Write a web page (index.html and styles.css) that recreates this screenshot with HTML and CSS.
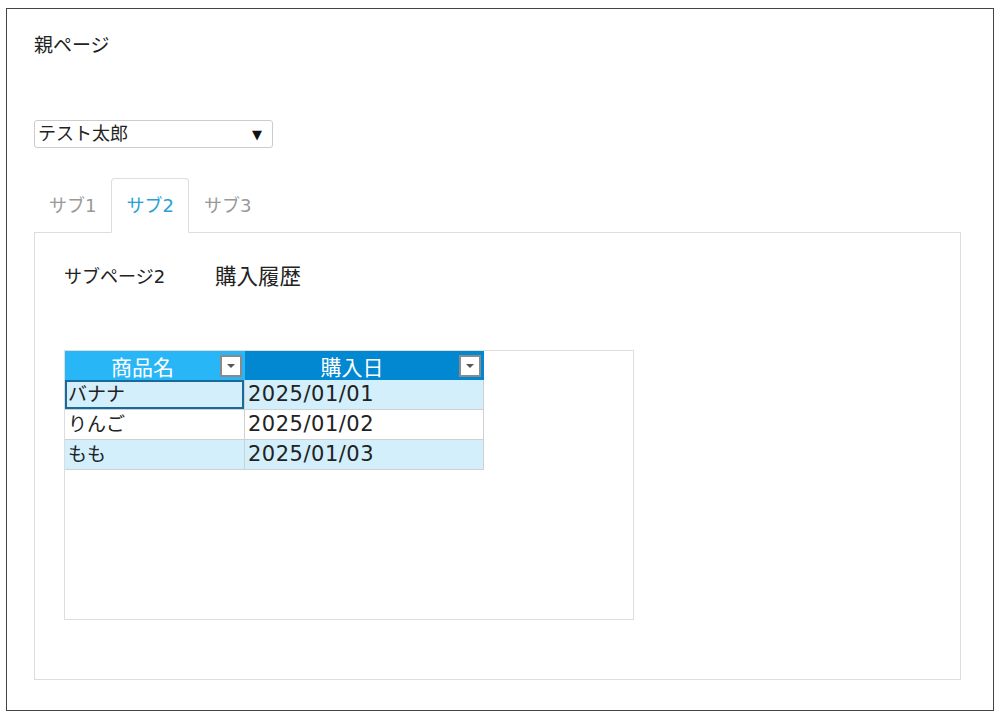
FILE: index.html
```html
<!DOCTYPE html>
<html lang="ja">
<head>
    <meta charset="UTF-8">
    <meta name="viewport" content="width=device-width, initial-scale=1.0">
    <title>親ページ</title>
    <link rel="stylesheet" href="styles.css">
</head>

<body>
    <div class="page">
        <h1 class="title">親ページ</h1>

        <div class="select">
            <span class="select-text">テスト太郎</span>
            <span class="select-arrow">▼</span>
        </div>

        <ul class="tabs">
            <li class="tab">サブ1</li>
            <li class="tab active">サブ2</li>
            <li class="tab">サブ3</li>
        </ul>

        <div class="panel">
            <div class="panel-head">
                <span class="sub-title">サブページ2</span>
                <span class="sub-caption">購入履歴</span>
            </div>

            <div class="grid">
                <div class="grid-header">
                    <div class="hcell col-name">
                        <span class="hcell-text">商品名</span>
                        <span class="filter-btn"><span class="filter-arrow"></span></span>
                    </div>
                    <div class="hcell col-date">
                        <span class="hcell-text">購入日</span>
                        <span class="filter-btn"><span class="filter-arrow"></span></span>
                    </div>
                </div>
                <div class="row alt">
                    <div class="cell selected">バナナ</div>
                    <div class="cell date">2025/01/01</div>
                </div>
                <div class="row">
                    <div class="cell">りんご</div>
                    <div class="cell date">2025/01/02</div>
                </div>
                <div class="row alt">
                    <div class="cell">もも</div>
                    <div class="cell date">2025/01/03</div>
                </div>
            </div>
        </div>
    </div>
</body>
</html>
```

FILE: styles.css
```css
body {
    margin: 0;
    font-family: "DejaVu Sans", "Noto Sans CJK JP", sans-serif;
    color: #222;
    background: white;
}
.page {
    margin: 8px 6px 0 6px;
    height: 703px;
    box-sizing: border-box;
    border: 1px solid #444;
    padding: 22px 32px 30px 27px;
    display: flex;
    flex-direction: column;
}
.title {
    margin: 0;
    font-size: 19px;
    font-weight: normal;
    line-height: 28px;
}
.select {
    margin-top: 61px;
    width: 239px;
    height: 28px;
    box-sizing: border-box;
    border: 1px solid #ccc;
    border-radius: 3px;
    display: flex;
    align-items: center;
    justify-content: space-between;
    padding: 0 10px 0 3px;
}
.select-text {
    font-size: 18px;
    line-height: 26px;
}
.select-arrow {
    font-size: 13px;
    color: #111;
}
.tabs {
    list-style: none;
    margin: 30px 0 -1px 0;
    padding: 0;
    display: flex;
    position: relative;
    z-index: 1;
}
.tab {
    font-size: 18px;
    line-height: 53px;
    padding: 0 14px;
    border: 1px solid transparent;
    border-radius: 4px 4px 0 0;
    color: #999;
}
.tab.active {
    color: #2a9fd6;
    border-color: #ddd;
    border-bottom-color: white;
    background: white;
}
.panel {
    flex: 1;
    border: 1px solid #ddd;
    padding: 30px 29px;
}
.panel-head {
    display: flex;
    gap: 50px;
    line-height: 28px;
}
.sub-title {
    font-size: 18px;
}
.sub-caption {
    font-size: 21.5px;
}
.grid {
    margin-top: 59px;
    width: 570px;
    height: 270px;
    box-sizing: border-box;
    border: 1px solid #ddd;
}
.grid-header {
    display: grid;
    grid-template-columns: 180px 239px;
    height: 29px;
}
.hcell {
    display: flex;
    align-items: center;
    color: white;
    font-size: 21px;
}
.hcell-text {
    flex: 1;
    text-align: center;
}
.col-name {
    background-color: #29b6f6;
}
.col-date {
    background-color: #0288d1;
}
.filter-btn {
    width: 22px;
    height: 22px;
    box-sizing: border-box;
    margin-right: 3px;
    border: 2px solid #8a8a8a;
    background: white;
    display: flex;
    align-items: center;
    justify-content: center;
}
.filter-arrow {
    width: 0;
    height: 0;
    border-left: 4px solid transparent;
    border-right: 4px solid transparent;
    border-top: 4px solid #555;
}
.row {
    display: grid;
    grid-template-columns: 180px 239px;
    height: 30px;
}
.cell {
    box-sizing: border-box;
    border-right: 1px solid #d0d0d0;
    border-bottom: 1px solid #d0d0d0;
    padding: 0 3px;
    font-size: 19px;
    line-height: 29px;
    white-space: nowrap;
}
.row.alt .cell {
    background-color: #d3effc;
}
.cell.date {
    font-size: 21px;
    letter-spacing: 0.5px;
}
.cell.selected {
    box-shadow: inset 0 0 0 2px #19699c;
}
```
